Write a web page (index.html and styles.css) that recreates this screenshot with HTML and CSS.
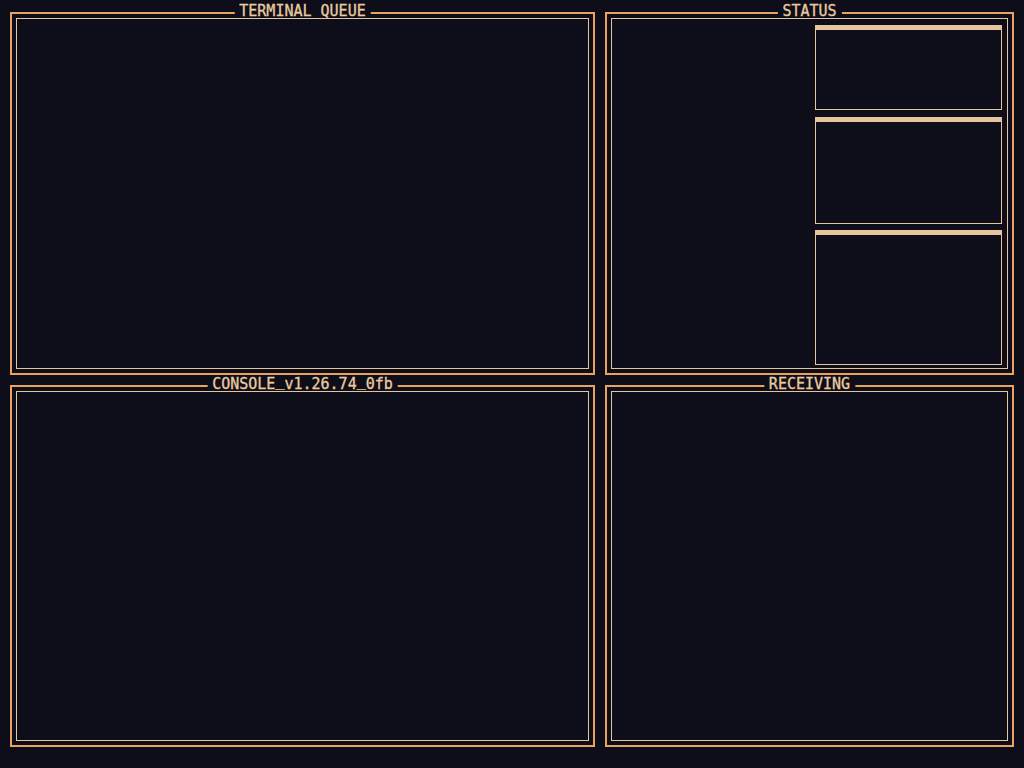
FILE: index.html
```html
<!DOCTYPE html>
<html>
<head>
<meta charset="utf-8">
<link rel="stylesheet" href="styles.css">
</head>
<body>
<div class="grid">
  <section class="panel">
    <span class="label">TERMINAL QUEUE</span>
    <div class="inner"></div>
  </section>
  <section class="panel">
    <span class="label">STATUS</span>
    <div class="inner status">
      <div class="stack">
        <div class="card c1"></div>
        <div class="card c2"></div>
        <div class="card c3"></div>
      </div>
    </div>
  </section>
  <section class="panel">
    <span class="label">CONSOLE<span class="us">_</span>v1.26.74<span class="us">_</span>0fb</span>
    <div class="inner"></div>
  </section>
  <section class="panel">
    <span class="label">RECEIVING</span>
    <div class="inner"></div>
  </section>
</div>
</body>
</html>
```

FILE: styles.css
```css
html, body {
  margin: 0;
  background: #0e0e1a;
  height: 100%;
}
body {
  padding: 12px 10px 0 10px;
  box-sizing: border-box;
  font-family: "DejaVu Sans Mono", "Liberation Mono", monospace;
}
.grid {
  display: grid;
  grid-template-columns: 585px 409px;
  grid-template-rows: 363px 362px;
  gap: 10px;
}
.panel {
  position: relative;
  border: 2px solid #e8a45c;
  padding: 4px;
  box-sizing: border-box;
}
.label {
  position: absolute;
  top: -10px;
  left: 50%;
  transform: translateX(-50%);
  height: 14px;
  line-height: 15px;
  font-size: 15px;
  padding: 0 5px;
  background: #0e0e1a;
  color: #eacb9f;
  white-space: nowrap;
  -webkit-text-stroke: 0.3px #eacb9f;
}
.us {
  position: relative;
  top: -3px;
}
.inner {
  border: 1px solid #e6c49c;
  height: 100%;
  box-sizing: border-box;
}
.status {
  display: flex;
  justify-content: flex-end;
  padding: 6px 5px 3px;
}
.stack {
  width: 187px;
  display: flex;
  flex-direction: column;
}
.card {
  border: 1px solid #e6c49c;
  border-top-width: 5px;
  box-sizing: border-box;
}
.c1 { height: 85px; }
.c2 { height: 107px; margin-top: 7px; }
.c3 { height: 135px; margin-top: 6px; }
```
